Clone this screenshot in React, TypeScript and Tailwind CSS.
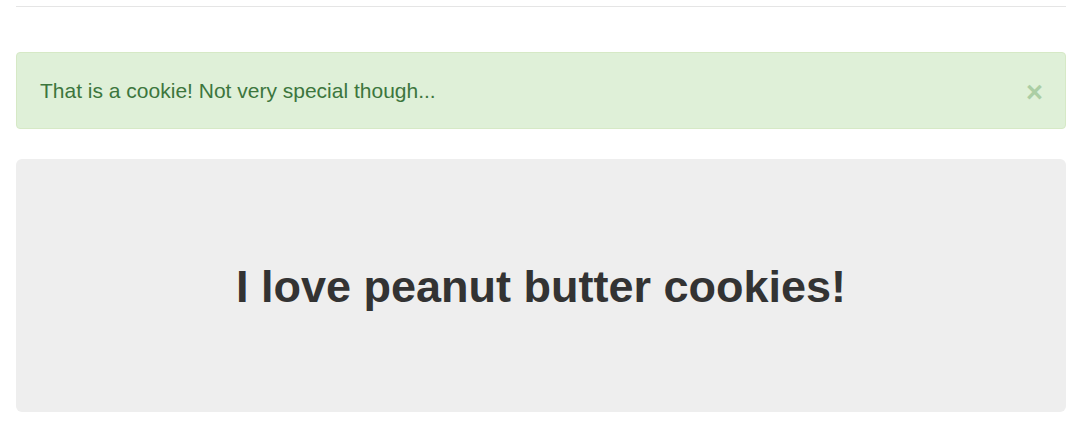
export default function App() {
  return (
    <div className="ml-4 w-[1050px] pt-[6px] font-['Liberation_Sans',Arial,sans-serif] text-[#333]">
      <hr className="border-t border-[#e5e5e5]" />
      {/* success alert */}
      <div className="relative mt-[45px] flex h-[77px] items-center rounded-[4px] border border-[#d6e9c6] bg-[#dff0d8] pl-[23px] pr-[35px] text-[21px] text-[#3c763d]">
        <p className="leading-[30px]">That is a cookie! Not very special though...</p>
        <button className="absolute right-[22px] top-[24px] text-[29px] font-bold leading-[30px] text-[#abcea4]">
          ×
        </button>
      </div>
      {/* jumbotron */}
      <div className="mt-[30px] flex h-[253px] items-center justify-center rounded-[6px] bg-[#eeeeee]">
        <h1 className="pt-[2px] text-[45px] font-bold leading-[50px] text-[#333]">I love peanut butter cookies!</h1>
      </div>
    </div>
  )
}
